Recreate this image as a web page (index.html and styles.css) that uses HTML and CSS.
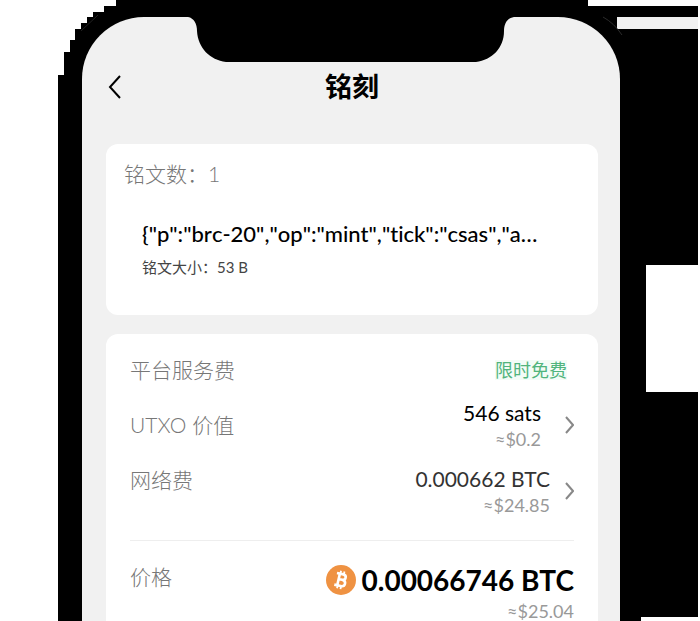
FILE: index.html
```html
<!DOCTYPE html>
<html lang="zh-CN">
<head>
<meta charset="utf-8">
<meta name="viewport" content="width=device-width, initial-scale=1">
<title>铭刻</title>
<link rel="stylesheet" href="styles.css">
</head>
<body>
<div class="stage">
  <svg class="edge-left" width="116" height="75" viewBox="0 0 116 75" aria-hidden="true">
    <path fill="#fff" d="M0 0H116V6H104V12H93V17H87V23H81V29H75V40H70V52H64V75H0Z"/>
    <path fill="none" stroke="#222" d="M81 31L98 15"/>
  </svg>
  <svg class="edge-right" width="112" height="621" viewBox="0 0 112 621" aria-hidden="true">
    <path fill="#fff" d="M0 0H112V621H53V617H110V392H58V265H110V6H0Z"/>
    <path fill="#f1f1f1" d="M29 17H110V29H29Z"/>
    <path fill="none" stroke="#2c2c2c" d="M15 17Q26 23 34 35"/>
  </svg>
  <main class="screen">
    <svg class="notch" width="326" height="46" viewBox="0 0 326 46" aria-hidden="true">
      <path d="M0 0C6 1 9 7 9 14C10 31 22 43 38 45H288C304 43 316 31 316 14C316 7 319 1 326 0Z"/>
    </svg>
    <header class="bar">
      <button class="back" type="button" aria-label="返回">
        <svg width="16" height="24" viewBox="0 0 16 24"><path d="M14 1L4 12L14 23"/></svg>
      </button>
      <h1>铭刻</h1>
    </header>

    <section class="card summary">
      <p class="label">铭文数：1</p>
      <div class="item">
        <p class="code">{"p":"brc-20","op":"mint","tick":"csas","a…</p>
        <p class="size">铭文大小：53 B</p>
      </div>
    </section>

    <section class="card fees">
      <div class="row">
        <span class="label">平台服务费</span>
        <span class="free">限时免费</span>
      </div>
      <div class="row">
        <span class="label">UTXO 价值</span>
        <button class="value wide" type="button">
          <span class="amounts"><span class="amount strong">546 sats</span><span class="fiat">≈$0.2</span></span>
          <svg width="10" height="18" viewBox="0 0 10 18" aria-hidden="true"><path d="M2 1L9 9L2 17"/></svg>
        </button>
      </div>
      <div class="row top">
        <span class="label">网络费</span>
        <button class="value" type="button">
          <span class="amounts"><span class="amount">0.000662 BTC</span><span class="fiat">≈$24.85</span></span>
          <svg width="10" height="18" viewBox="0 0 10 18" aria-hidden="true"><path d="M2 1L9 9L2 17"/></svg>
        </button>
      </div>
      <div class="total">
        <span class="label">价格</span>
        <div class="sum">
          <div class="price">
            <svg width="30" height="30" viewBox="0 0 30 30" aria-hidden="true">
              <circle cx="15" cy="15" r="15" fill="#ef9242"/>
              <g transform="rotate(13 15 15)" fill="none" stroke="#fff">
                <path stroke-width="2.6" d="M12.5 9V21M9.500 9H16C20 9 20 14.500 16 14.500H12.500M16 14.500C21 14.500 21 21 16 21H9.500"/>
                <path stroke-width="1.800" d="M13 6V9M16.500 6V9M13 21V24M16.500 21V24"/>
              </g>
            </svg>
            <strong>0.00066746 BTC</strong>
          </div>
          <span class="fiat">≈$25.04</span>
        </div>
      </div>
    </section>
  </main>
</div>
</body>
</html>
```
FILE: styles.css
```css
* { box-sizing: border-box; }
body {
  margin: 0;
  background: #fff;
  color: #000;
  font-family: Lato, "Noto Sans CJK SC", sans-serif;
}
h1, p { margin: 0; }
button {
  padding: 0;
  border: 0;
  background: none;
  color: inherit;
  font: inherit;
  cursor: pointer;
}
.stage {
  position: relative;
  min-height: 100vh;
  padding: 17px 80px 0 24px;
  border-left: 58px solid #fff;
  background: #000;
}
.edge-left { position: absolute; top: 0; left: -58px; }
.edge-right { position: absolute; top: 0; right: 0; }
.screen {
  position: relative;
  min-height: calc(100vh - 17px);
  padding: 0 22px 0 24px;
  border-radius: 62px 62px 0 0;
  background: #f1f1f1;
}
.notch {
  position: absolute;
  top: 0;
  left: 50%;
  transform: translateX(-50%);
}
.bar {
  display: grid;
  grid-template-columns: 28px 1fr 28px;
  align-items: center;
  height: 127px;
  padding-top: 12px;
}
.back { height: 28px; text-align: left; }
.back svg { display: block; }
.back path { fill: none; stroke: #000; stroke-width: 2; }
h1 {
  font-size: 27px;
  line-height: 40px;
  font-weight: 700;
  text-align: center;
}
.card {
  border-radius: 12px;
  background: #fff;
}
.label {
  color: #777;
  font-size: 21px;
  line-height: 30px;
  font-weight: 300;
}
.summary {
  height: 171px;
  padding: 15px 18px;
}
.item { padding: 29px 36px 0 18px; }
.code {
  font-size: 22px;
  line-height: 32px;
  font-weight: 500;
  font-kerning: none;
  font-variant-ligatures: none;
  white-space: nowrap;
}
.size {
  margin-top: 6px;
  color: #444;
  font-size: 15px;
  line-height: 22px;
}
.fees {
  margin-top: 19px;
  padding: 21px 24px 0;
  border-radius: 12px 12px 0 0;
}
.row {
  display: flex;
  align-items: center;
  justify-content: space-between;
}
.row + .row { margin-top: 14px; }
.top { align-items: flex-start; }
.free {
  margin-right: 7px;
  background: #f3fcf7;
  color: #50b47c;
  font-size: 18px;
  line-height: 20px;
}
.value {
  display: flex;
  align-items: center;
  gap: 14px;
}
.value.wide { gap: 23px; }
.value path { fill: none; stroke: #888; stroke-width: 2; }
.amounts {
  display: flex;
  flex-direction: column;
  align-items: flex-end;
}
.amount {
  color: #333;
  font-size: 21px;
  line-height: 28px;
}
.strong { color: #000; }
.fiat {
  color: #999;
  font-size: 18px;
  line-height: 24px;
}
.total {
  display: flex;
  justify-content: space-between;
  margin-top: 23px;
  padding-top: 21px;
  border-top: 1px solid #eee;
}
.sum {
  display: flex;
  flex-direction: column;
  align-items: flex-end;
  gap: 1px;
}
.price {
  display: flex;
  align-items: center;
  gap: 6px;
}
.price strong {
  font-size: 28px;
  line-height: 36px;
  font-weight: 700;
}
```
